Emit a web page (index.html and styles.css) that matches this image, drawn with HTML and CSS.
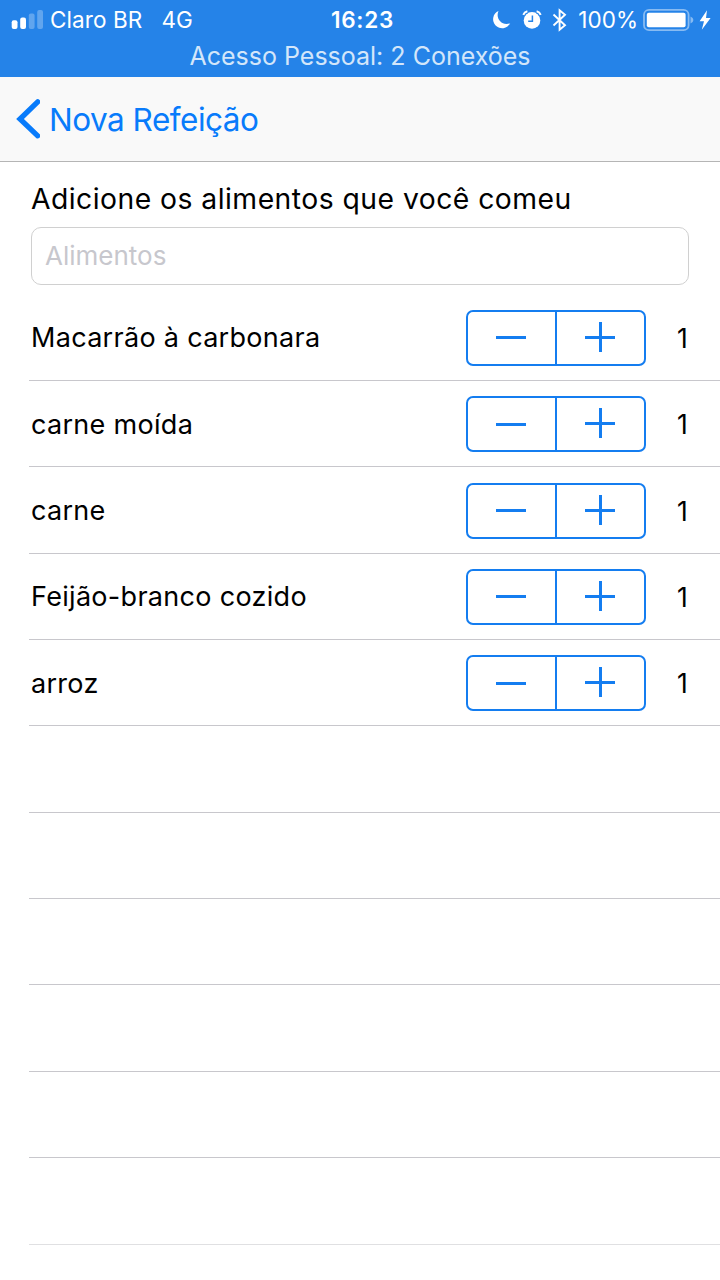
FILE: index.html
```html
<!DOCTYPE html>
<html lang="pt-BR">
<head>
<meta charset="utf-8">
<title>Nova Refeição</title>
<link rel="stylesheet" href="styles.css">
</head>
<body>
<header class="status">
  <div class="status-row">
    <div class="status-left">
      <svg class="signal" width="32" height="20" viewBox="0 0 32 20" fill="#fff">
        <rect x="0.7" y="10.3" width="5.8" height="8.7" rx="2"/>
        <rect x="9.2" y="7.5" width="5.8" height="11.5" rx="2"/>
        <rect x="17.8" y="3.5" width="5.8" height="15.5" rx="2" opacity=".28"/>
        <rect x="26.2" y="0" width="5.8" height="19" rx="2" opacity=".28"/>
      </svg>
      <span class="carrier">Claro BR</span>
      <span class="network">4G</span>
    </div>
    <span class="time">16:23</span>
    <div class="status-right">
      <svg class="moon" width="20" height="20" viewBox="0 0 20 20"><path d="M7.5 1A9 9 0 1 0 19.2 13.2C11.5 16.5 4 9 7.5 1Z" fill="#fff"/></svg>
      <svg class="alarm" width="20" height="20" viewBox="0 0 20 20" fill="none">
        <circle cx="10" cy="10.4" r="8.3" fill="#fff"/>
        <path d="M1.5 5.2Q2.3 2.2 5.6 1.5M14.4 1.5Q17.7 2.2 18.5 5.2" stroke="#2583e8" stroke-width="3.4"/>
        <path d="M1.3 4.8Q2.3 2 5.4 1.3M14.6 1.3Q17.7 2 18.7 4.8" stroke="#fff" stroke-width="2"/>
        <path d="M10.4 5.5V11.2H6.2" stroke="#2583e8" stroke-width="1.5"/>
      </svg>
      <svg class="bluetooth" width="16" height="24" viewBox="0 0 16 24"><path d="M1.5 6.5L13 17.2L7.6 21.8V2.2L13 6.8L1.5 17.5" fill="none" stroke="#fff" stroke-width="1.9"/></svg>
      <span class="percent">100%</span>
      <svg class="battery" width="52" height="24" viewBox="0 0 52 24">
        <rect x="1" y="1.8" width="44.6" height="20.4" rx="5" fill="none" stroke="#fff" stroke-opacity=".45" stroke-width="1.8"/>
        <rect x="3.8" y="4.7" width="38.8" height="14.6" rx="2" fill="#fff"/>
        <path d="M47.5 8.5Q50.4 9.7 50.4 12T47.5 15.5Z" fill="#fff" opacity=".45"/>
      </svg>
      <svg class="bolt" width="12" height="20" viewBox="0 0 12 20"><path d="M8 .3L.6 11.2H5L2.8 19.8L11.6 7.9H7Z" fill="#fff"/></svg>
    </div>
  </div>
  <div class="hotspot"><span>Acesso Pessoal: 2 Conexões</span></div>
</header>
<nav class="nav">
  <svg width="26" height="42" viewBox="0 0 26 42"><path d="M23.7 3.8L6 21L23.7 37.8" fill="none" stroke="#087bfb" stroke-width="5.3" stroke-linecap="round"/></svg>
  <span class="back">Nova Refeição</span>
</nav>
<section class="search">
  <h1 class="prompt"><span>Adicione os alimentos que você comeu</span></h1>
  <div class="field"><span>Alimentos</span></div>
</section>
<main class="list">
  <div class="row"><span class="name">Macarrão à carbonara</span><div class="stepper"><i class="minus"></i><i class="plus"></i></div><span class="qty">1</span></div>
  <div class="row"><span class="name">carne moída</span><div class="stepper"><i class="minus"></i><i class="plus"></i></div><span class="qty">1</span></div>
  <div class="row"><span class="name">carne</span><div class="stepper"><i class="minus"></i><i class="plus"></i></div><span class="qty">1</span></div>
  <div class="row"><span class="name">Feijão-branco cozido</span><div class="stepper"><i class="minus"></i><i class="plus"></i></div><span class="qty">1</span></div>
  <div class="row"><span class="name">arroz</span><div class="stepper"><i class="minus"></i><i class="plus"></i></div><span class="qty">1</span></div>
  <div class="row"></div>
  <div class="row"></div>
  <div class="row"></div>
  <div class="row"></div>
  <div class="row"></div>
  <div class="row last"></div>
</main>
</body>
</html>
```
FILE: styles.css
```css
* { box-sizing: border-box; }
body {
  margin: 0;
  width: 720px;
  height: 1280px;
  overflow: hidden;
  background: #fff;
  color: #000;
  font-family: Inter, "Liberation Sans", sans-serif;
}
svg { display: block; flex: none; }
span { white-space: nowrap; }
.status { height: 77px; background: #2583e8; color: #fff; }
.status-row {
  height: 40px;
  display: grid;
  grid-template-columns: 331px 1fr auto;
  font-size: 22.5px;
  line-height: 40px;
}
.status-left, .status-right { display: flex; align-items: center; }
.status-left { padding-left: 11px; }
.carrier { margin-left: 7px; letter-spacing: 0.1px; }
.network { margin-left: 19px; }
.time { font-weight: 600; letter-spacing: 0.7px; }
.status-right { padding-right: 9px; }
.alarm { margin-left: 11px; }
.bluetooth { margin-left: 10px; }
.percent { margin-left: 10px; }
.battery { margin-left: 5px; }
.bolt { margin-left: 4px; }
.moon, .alarm { margin-bottom: 1px; }
.hotspot {
  height: 34px;
  line-height: 33px;
  text-align: center;
  font-size: 25px;
  color: #d3e6fa;
}
.nav {
  height: 85px;
  display: flex;
  align-items: center;
  padding-left: 14px;
  background: #f9f9f9;
  border-bottom: 1px solid #b5b5b5;
  color: #087bfb;
  font-size: 31.5px;
  letter-spacing: -0.5px;
}
.back { margin-left: 9px; }
.search { height: 132.7px; padding: 17px 31px 0; }
.prompt {
  margin: 0;
  height: 48px;
  line-height: 40px;
  font-size: 28.3px;
  font-weight: 400;
  letter-spacing: 0.47px;
}
.field {
  height: 58px;
  display: flex;
  align-items: center;
  padding: 0 13px 2px;
  border: 1.5px solid #d0d0d0;
  border-radius: 10px;
  color: #c7c7cd;
  font-size: 26px;
}
.row {
  height: 86.35px;
  margin-left: 29px;
  padding: 1.2px 0 0 2px;
  display: grid;
  grid-template-columns: 435px 180px 1fr;
  align-items: center;
  border-bottom: 1px solid #c8c7cc;
  font-size: 27px;
  letter-spacing: 0.3px;
}
.last { height: 86.9px; border-color: #e0e0e2; }
.stepper {
  height: 56px;
  display: grid;
  grid-template-columns: 1fr 1fr;
  border: 2px solid #147df0;
  border-radius: 7px;
}
.minus {
  margin-right: -1px;
  border-right: 2px solid #147df0;
  background: linear-gradient(#147df0, #147df0) 28px center / 30px 3px no-repeat;
}
.plus {
  background:
    linear-gradient(#147df0, #147df0) 29px 24px / 30px 3px no-repeat,
    linear-gradient(#147df0, #147df0) 43px 10px / 3px 30px no-repeat;
}
.qty { padding-left: 31px; font-size: 26.5px; }
```
